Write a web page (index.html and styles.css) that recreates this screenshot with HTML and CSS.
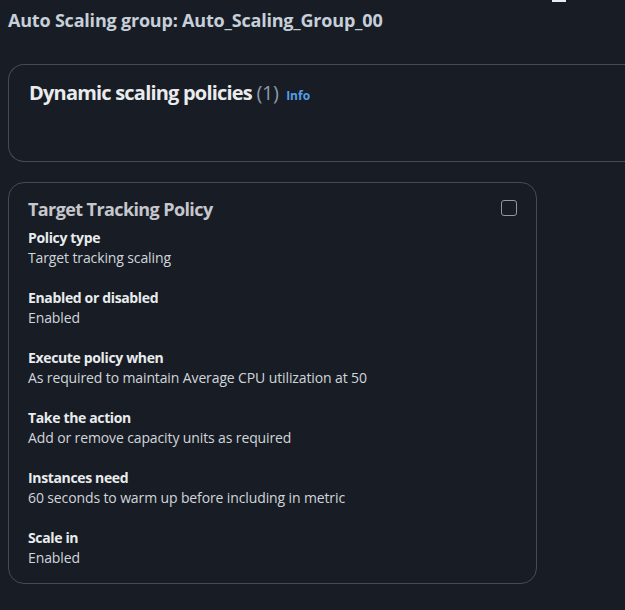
FILE: index.html
```html
<!DOCTYPE html>
<html>
<head>
<meta charset="utf-8">
<link rel="stylesheet" href="styles.css">
</head>
<body>
<div class="topmark"></div>
<h1 class="page-title">Auto Scaling group: Auto_Scaling_Group_00</h1>
<section class="panel">
  <h2 class="panel-title">Dynamic scaling policies <span class="count">(1)</span> <a class="info">Info</a></h2>
</section>
<section class="card">
  <div class="card-head">
    <h3 class="card-title">Target Tracking Policy</h3>
    <span class="checkbox"></span>
  </div>
  <dl class="fields">
    <div class="field"><dt>Policy type</dt><dd>Target tracking scaling</dd></div>
    <div class="field"><dt>Enabled or disabled</dt><dd>Enabled</dd></div>
    <div class="field"><dt>Execute policy when</dt><dd>As required to maintain Average CPU utilization at 50</dd></div>
    <div class="field"><dt>Take the action</dt><dd>Add or remove capacity units as required</dd></div>
    <div class="field"><dt>Instances need</dt><dd>60 seconds to warm up before including in metric</dd></div>
    <div class="field"><dt>Scale in</dt><dd>Enabled</dd></div>
  </dl>
</section>
</body>
</html>
```
FILE: styles.css
```css
html, body {
  margin: 0;
  padding: 0;
  background: #181d25;
  overflow: hidden;
}
body {
  font-family: "Open Sans", "Noto Sans", sans-serif;
  color: #d1d5db;
  padding: 8px 0 0 8px;
  position: relative;
  height: 610px;
  box-sizing: border-box;
}
.topmark {
  position: absolute;
  left: 552px;
  top: 0;
  width: 14px;
  height: 2px;
  background: #e9ebed;
}
.page-title {
  margin: 0;
  font-size: 18px;
  line-height: 24px;
  font-weight: 700;
  letter-spacing: -0.2px;
  color: #c6cfda;
}
.panel {
  margin-top: 32px;
  border: 1px solid #434b56;
  border-right: none;
  border-radius: 16px 0 0 16px;
  height: 98px;
  padding: 15px 0 0 20px;
  box-sizing: border-box;
}
.panel-title {
  margin: 0;
  font-size: 20px;
  line-height: 26px;
  font-weight: 700;
  letter-spacing: -0.8px;
  color: #e9ebed;
}
.count {
  font-weight: 400;
  letter-spacing: -0.3px;
  color: #8d99a8;
}
.info {
  font-size: 12px;
  font-weight: 700;
  letter-spacing: 0;
  color: #539fe5;
  margin-left: 3px;
}
.card {
  margin-top: 20px;
  width: 529px;
  box-sizing: border-box;
  border: 1px solid #434b56;
  border-radius: 16px;
  padding: 15px 19px 15px 19px;
}
.card-head {
  display: flex;
  justify-content: space-between;
  align-items: center;
}
.card-title {
  margin: 0;
  font-size: 18px;
  line-height: 22px;
  font-weight: 700;
  letter-spacing: -0.6px;
  color: #c6c6cd;
}
.checkbox {
  width: 14px;
  height: 14px;
  border: 1px solid #8d99a8;
  border-radius: 3px;
  margin-top: -3px;
}
.fields {
  margin: 8px 0 0 0;
  display: flex;
  flex-direction: column;
  gap: 20px;
}
.field dt {
  font-size: 14px;
  line-height: 20px;
  font-weight: 700;
  letter-spacing: -0.35px;
  color: #e9ebed;
}
.field dd {
  margin: 0;
  font-size: 14px;
  line-height: 20px;
  letter-spacing: -0.12px;
  color: #d1d5db;
}
```
